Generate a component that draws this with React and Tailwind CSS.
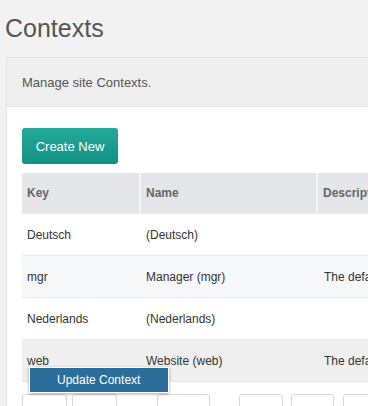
import React from "react";

const rows = [
  { key: "Deutsch", name: "(Deutsch)", desc: "", bg: "bg-white" },
  { key: "mgr", name: "Manager (mgr)", desc: "The default manager context.", bg: "bg-[#f7f8fa]" },
  { key: "Nederlands", name: "(Nederlands)", desc: "", bg: "bg-white" },
  { key: "web", name: "Website (web)", desc: "The default front-end context.", bg: "bg-[#efefef]" },
];

export default function App() {
  return (
    <div className="w-[368px] h-[406px] overflow-hidden bg-[#f2f2f2] font-['Liberation_Sans',Arial,sans-serif]">
      <h1 className="pt-[16px] pl-[5px] text-[25px] leading-[25px] text-[#555] font-normal">Contexts</h1>
      <div className="mt-[16px] ml-[6px] w-[600px] border-l border-t border-[#e3e3e3] bg-white">
        <div className="h-[49px] flex items-center pt-[2px] px-[15px] bg-[#efefef] border-b border-[#e8e8e8] text-[13px] text-[#555]">
          Manage site Contexts.
        </div>
        <div className="pl-[15px] pt-[21px]">
          <button className="w-[96px] h-[36px] rounded-[3px] bg-gradient-to-b from-[#22aa9b] to-[#139083] text-white text-[13px] flex items-center justify-center pt-[1px]">
            Create New
          </button>
          <div className="relative mt-[9px]">
            <div className="flex h-[40px] bg-[#e4e6e9] text-[12px] font-bold text-[#666]">
              <div className="w-[117px] flex items-center pl-[5px]">Key</div>
              <div className="w-[2px] bg-[#f6f7f8]" />
              <div className="w-[175px] flex items-center pl-[5px]">Name</div>
              <div className="w-[2px] bg-[#f6f7f8]" />
              <div className="flex-1 flex items-center pl-[5px]">Description</div>
            </div>
            {rows.map((r) => (
              <div key={r.key} className={`flex h-[42px] border-t border-[#ebebeb] text-[12px] text-[#333] ${r.bg}`}>
                <div className="w-[119px] flex items-center pl-[5px]">{r.key}</div>
                <div className="w-[177px] flex items-center pl-[5px]">{r.name}</div>
                <div className="flex-1 flex items-center pl-[6px] whitespace-nowrap">{r.desc}</div>
              </div>
            ))}
            <div className="border-t border-[#e6e6e6]" />
            <div className="absolute left-[7px] top-[194px] w-[140px] h-[26px] border border-white bg-[#2b6d9b] shadow-[0_1px_3px_rgba(0,0,0,0.35)] text-white text-[12px] flex items-center pl-[27px]">
              Update Context
            </div>
            <div className="flex mt-[12px] text-[16px] text-[#666]">
              <div className="w-[45px] h-[30px] border border-[#d9d9d9] rounded-[3px] bg-white flex items-center justify-center pl-[2px] leading-none">«</div>
              <div className="ml-[5px] w-[45px] h-[30px] border border-[#d9d9d9] rounded-[3px] bg-white" />
              <div className="ml-[40px] w-[53px] h-[30px] border border-[#d9d9d9] rounded-[3px] bg-white" />
              <div className="ml-[29px] w-[44px] h-[30px] border border-[#d9d9d9] rounded-[3px] bg-white" />
              <div className="ml-[8px] w-[43px] h-[30px] border border-[#d9d9d9] rounded-[3px] bg-white flex items-center justify-center leading-none">»</div>
              <div className="ml-[9px] w-[45px] h-[30px] border border-[#d9d9d9] rounded-[3px] bg-white flex items-center pl-[18px] leading-none">‹</div>
            </div>
          </div>
        </div>
      </div>
    </div>
  );
}
